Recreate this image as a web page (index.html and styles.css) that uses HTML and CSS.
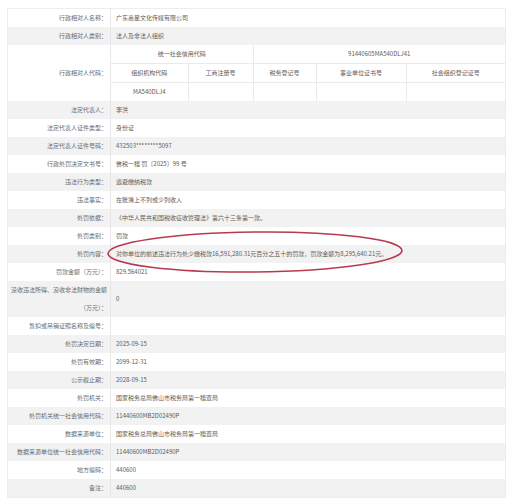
FILE: index.html
```html
<!DOCTYPE html>
<html lang="zh-CN">
<head>
    <meta charset="UTF-8">
    <title>行政处罚信息</title>
    <link rel="stylesheet" href="styles.css">
</head>
<body>

<div class="page">
    <table class="info">
        <colgroup>
            <col class="label-col">
            <col>
        </colgroup>
        <tr><th>行政相对人名称：</th><td>广东嘉星文化传媒有限公司</td></tr>
        <tr class="alt"><th>行政相对人类别：</th><td>法人及非法人组织</td></tr>
        <tr class="code-row">
            <th>行政相对人代码：</th>
            <td class="nest">
                <table class="codes">
                    <colgroup>
                        <col style="width:77px">
                        <col style="width:65px">
                        <col style="width:63px">
                        <col style="width:90px">
                        <col>
                    </colgroup>
                    <tr><td colspan="2">统一社会信用代码</td><td colspan="3">91440605MA540DLJ41</td></tr>
                    <tr><td>组织机构代码</td><td>工商注册号</td><td>税务登记号</td><td>事业单位证书号</td><td>社会组织登记证号</td></tr>
                    <tr><td>MA540DLJ4</td><td></td><td></td><td></td><td></td></tr>
                </table>
            </td>
        </tr>
        <tr class="alt"><th>法定代表人：</th><td>李洪</td></tr>
        <tr><th>法定代表人证件类型：</th><td>身份证</td></tr>
        <tr class="alt"><th>法定代表人证件号码：</th><td>432503********5097</td></tr>
        <tr><th>行政处罚决定文书号：</th><td>佛税一稽 罚〔2025〕99 号</td></tr>
        <tr class="alt"><th>违法行为类型：</th><td>逃避缴纳税款</td></tr>
        <tr><th>违法事实：</th><td>在账簿上不列或少列收入</td></tr>
        <tr class="alt"><th>处罚依据：</th><td>《中华人民共和国税收征收管理法》第六十三条第一款。</td></tr>
        <tr><th>处罚类别：</th><td>罚款</td></tr>
        <tr class="alt"><th>处罚内容：</th><td>对你单位的前述违法行为处少缴税款16,591,280.31元百分之五十的罚款，罚款金额为8,295,640.21元。</td></tr>
        <tr><th>罚款金额（万元）：</th><td>829.564021</td></tr>
        <tr class="alt tall"><th>没收违法所得、没收非法财物的金额（万元）：</th><td>0</td></tr>
        <tr><th>暂扣或吊销证照名称及编号：</th><td></td></tr>
        <tr class="alt"><th>处罚决定日期：</th><td>2025-09-15</td></tr>
        <tr><th>处罚有效期：</th><td>2099-12-31</td></tr>
        <tr class="alt"><th>公示截止期：</th><td>2028-09-15</td></tr>
        <tr><th>处罚机关：</th><td>国家税务总局佛山市税务局第一稽查局</td></tr>
        <tr class="alt"><th>处罚机关统一社会信用代码：</th><td>11440600MB2D02490P</td></tr>
        <tr><th>数据来源单位：</th><td>国家税务总局佛山市税务局第一稽查局</td></tr>
        <tr class="alt"><th>数据来源单位统一社会信用代码：</th><td>11440600MB2D02490P</td></tr>
        <tr><th>地方编码：</th><td>440600</td></tr>
        <tr class="alt"><th>备注：</th><td>440600</td></tr>
    </table>

    <!-- red hand-drawn circle around the penalty content -->
    <svg class="mark" width="512" height="500" viewBox="0 0 512 500">
        <ellipse cx="255" cy="252" rx="147" ry="20" fill="none" stroke="#b83a50" stroke-width="1.6" transform="rotate(-0.6 255 252)"/>
    </svg>
</div>

</body>
</html>
```

FILE: styles.css
```css
html, body {
    margin: 0;
    padding: 0;
    background: #fff;
}

body {
    font-family: "Noto Sans CJK SC", "Noto Sans", sans-serif;
    font-size: 6px;
    color: #666;
}

.page {
    position: relative;
    width: 512px;
    height: 500px;
    padding-top: 8px;
    box-sizing: border-box;
}

.info {
    width: 499px;
    margin-left: 7px;
    border-collapse: collapse;
    table-layout: fixed;
    border: 1px solid #ededed;
}

.label-col {
    width: 103px;
}

.info th,
.info td {
    height: 18px;
    padding: 0;
    line-height: 18px;
    font-weight: normal;
    white-space: nowrap;
}

.info th {
    text-align: right;
    padding-right: 3px;
    color: #6a6a6a;
    border-right: 1px solid #e6e6e6;
}

.info td {
    padding-left: 5px;
    color: #5c5c5c;
}

.info tr.alt {
    background: #f2f2f2;
}

.info tr.tall th {
    height: 36px;
    white-space: normal;
    line-height: 18px;
    padding-left: 0;
}

.info td.nest {
    padding: 0;
}

.codes {
    width: 100%;
    border-collapse: collapse;
    table-layout: fixed;
}

.codes td {
    height: 17px;
    padding: 0;
    text-align: center;
    border-right: 1px solid #eaeaea;
    border-bottom: 1px solid #eaeaea;
}

.codes td:last-child {
    border-right: none;
}

.codes tr:last-child td {
    border-bottom: none;
}

.mark {
    position: absolute;
    left: 0;
    top: 0;
    pointer-events: none;
}
```
